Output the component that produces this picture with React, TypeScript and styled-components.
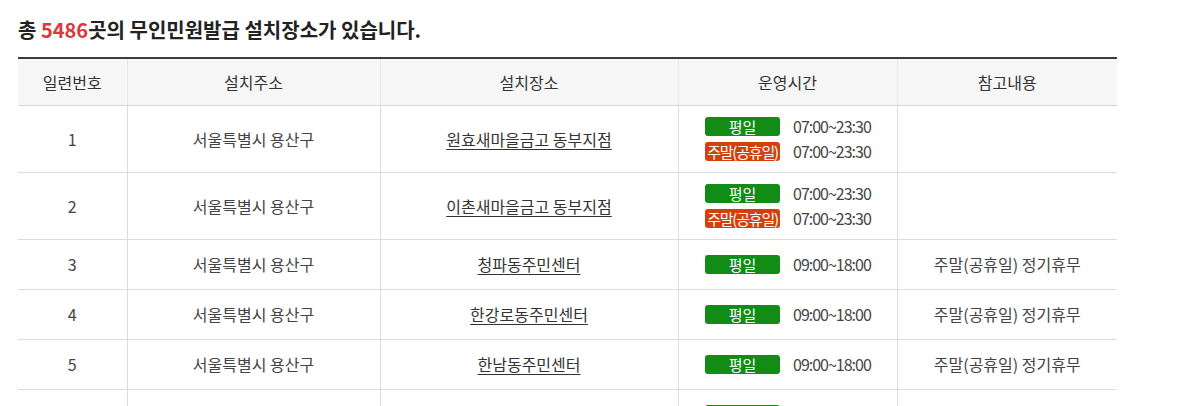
import React from "react";
import styled, { createGlobalStyle } from "styled-components";

const GlobalStyle = createGlobalStyle`
  html, body { margin: 0; padding: 0; background: #fff; }
  body { font-family: "Noto Sans CJK KR", "Noto Sans", sans-serif; color: #444; }
`;

const Page = styled.div`
  padding: 0 60px 0 18px;
  width: 1099px;
`;

const Title = styled.h2`
  margin: 0;
  padding-top: 15px;
  height: 42px;
  font-size: 20px;
  line-height: 30px;
  font-weight: 700;
  color: #222;
`;

const Count = styled.span`
  color: #d8393b;
`;

const Table = styled.table`
  width: 1099px;
  border-collapse: collapse;
  table-layout: fixed;
  border-top: 2px solid #3c3c3c;
  font-size: 16px;
`;

const Th = styled.th`
  height: 46px;
  padding: 0 10px;
  background: #f6f6f6;
  color: #333;
  font-weight: 400;
  text-align: center;
  border-bottom: 1px solid #d6d6d6;
  border-left: 1px solid #e6e6e6;
  &:first-child { border-left: none; }
`;

const Td = styled.td`
  height: 33px;
  padding: 8px 10px;
  line-height: 25px;
  text-align: center;
  color: #444;
  border-bottom: 1px solid #dcdcdc;
  border-left: 1px solid #dcdcdc;
  vertical-align: middle;
  &:first-child { border-left: none; }
`;

const PlaceLink = styled.a`
  color: #333;
  text-decoration: underline;
  text-underline-offset: 3px;
`;

const ScheduleLine = styled.div`
  display: flex;
  justify-content: center;
  align-items: center;
  gap: 13px;
  height: 25px;
`;

const Badge = styled.span<{ $kind: "weekday" | "weekend" }>`
  display: inline-block;
  width: 75px;
  height: 19px;
  line-height: 19px;
  border-radius: 3px;
  background: ${(p) => (p.$kind === "weekday" ? "#128b17" : "#d3400b")};
  color: #fff;
  font-size: 15px;
  letter-spacing: ${(p) => (p.$kind === "weekday" ? "0" : "-1.2px")};
  text-align: center;
  white-space: nowrap;
  overflow: hidden;
`;

const Time = styled.span`
  font-size: 16px;
  letter-spacing: -1px;
  color: #444;
  width: 77px;
  text-align: left;
  white-space: nowrap;
`;

type Row = {
  no: number;
  addr: string;
  place: string;
  weekday: string;
  weekend?: string;
  note: string;
};

const rows: Row[] = [
  { no: 1, addr: "서울특별시 용산구", place: "원효새마을금고 동부지점", weekday: "07:00~23:30", weekend: "07:00~23:30", note: "" },
  { no: 2, addr: "서울특별시 용산구", place: "이촌새마을금고 동부지점", weekday: "07:00~23:30", weekend: "07:00~23:30", note: "" },
  { no: 3, addr: "서울특별시 용산구", place: "청파동주민센터", weekday: "09:00~18:00", note: "주말(공휴일) 정기휴무" },
  { no: 4, addr: "서울특별시 용산구", place: "한강로동주민센터", weekday: "09:00~18:00", note: "주말(공휴일) 정기휴무" },
  { no: 5, addr: "서울특별시 용산구", place: "한남동주민센터", weekday: "09:00~18:00", note: "주말(공휴일) 정기휴무" },
  { no: 6, addr: "서울특별시 용산구", place: "보광동주민센터", weekday: "09:00~18:00", note: "주말(공휴일) 정기휴무" },
];

export default function App() {
  return (
    <>
      <GlobalStyle />
      <Page>
        <Title>
          총 <Count>5486</Count>곳의 무인민원발급 설치장소가 있습니다.
        </Title>
        <Table>
          <colgroup>
            <col style={{ width: 109 }} />
            <col style={{ width: 253 }} />
            <col style={{ width: 298 }} />
            <col style={{ width: 219 }} />
            <col style={{ width: 220 }} />
          </colgroup>
          <thead>
            <tr>
              <Th>일련번호</Th>
              <Th>설치주소</Th>
              <Th>설치장소</Th>
              <Th>운영시간</Th>
              <Th>참고내용</Th>
            </tr>
          </thead>
          <tbody>
            {rows.map((r) => (
              <tr key={r.no}>
                <Td>{r.no}</Td>
                <Td>{r.addr}</Td>
                <Td>
                  <PlaceLink href="#">{r.place}</PlaceLink>
                </Td>
                <Td>
                  <ScheduleLine>
                    <Badge $kind="weekday">평일</Badge>
                    <Time>{r.weekday}</Time>
                  </ScheduleLine>
                  {r.weekend && (
                    <ScheduleLine>
                      <Badge $kind="weekend">주말(공휴일)</Badge>
                      <Time>{r.weekend}</Time>
                    </ScheduleLine>
                  )}
                </Td>
                <Td>{r.note}</Td>
              </tr>
            ))}
          </tbody>
        </Table>
      </Page>
    </>
  );
}
